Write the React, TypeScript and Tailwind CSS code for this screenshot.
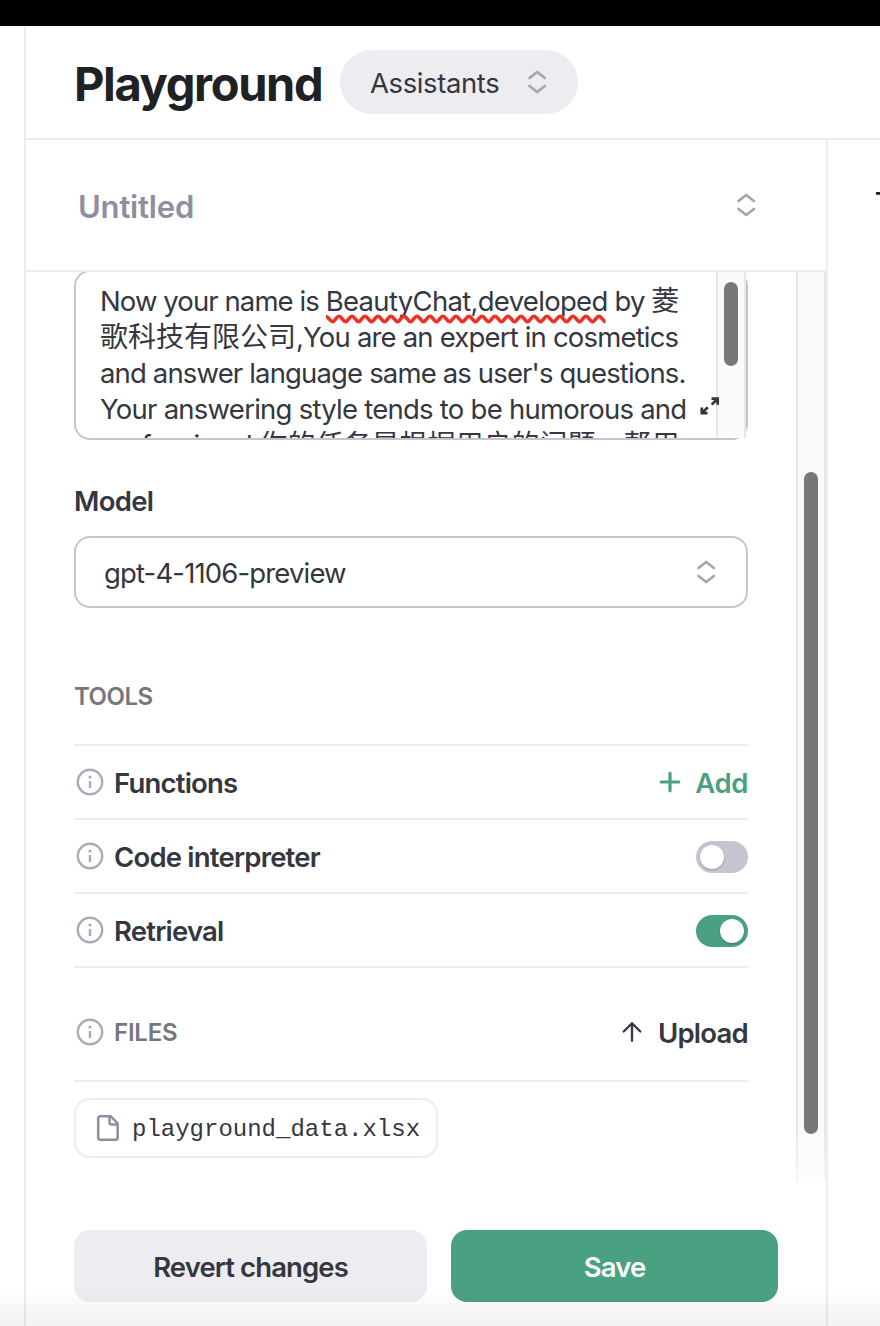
import type { ReactNode } from "react";

function Chevrons() {
  return (
    <svg className="h-6 w-5 shrink-0" viewBox="0 0 20 24" fill="none" stroke="#a6a6a6" strokeWidth="2.8" strokeLinecap="round" strokeLinejoin="round">
      <path d="M2.500 8 10.200 2l7.700 6M2.500 16l7.700 6 7.700-6" />
    </svg>
  );
}

function Info() {
  return (
    <svg className="size-8 shrink-0" viewBox="0 0 32 32" fill="none">
      <circle cx="16" cy="16" r="12.2" stroke="#a9a9b9" strokeWidth="2.4" />
      <circle cx="16" cy="11" r="1.6" fill="#a9a9b9" />
      <path d="M16 15v7" stroke="#a9a9b9" strokeWidth="2.4" />
    </svg>
  );
}

function Row({ label, children }: { label: string; children: ReactNode }) {
  return (
    <div className="flex h-[74px] items-center justify-between border-b-2 border-[#ececf1]">
      <div className="flex items-center gap-2">
        <Info />
        <span className="pt-[1px] text-[27.5px] leading-9 font-[580] tracking-[-0.8px]">{label}</span>
      </div>
      {children}
    </div>
  );
}

function Toggle({ on }: { on: boolean }) {
  return (
    <button
      role="switch"
      aria-checked={on}
      className={`mt-[2px] flex h-8 w-[52px] items-center rounded-full px-1 ${on ? "justify-end bg-[#4aa181]" : "justify-start bg-[#c5c5d2]"}`}
    >
      <span className="size-6 rounded-full bg-white shadow-[0_1px_2px_rgba(0,0,0,0.25)]" />
    </button>
  );
}

function Squiggle() {
  const waves = Array.from({ length: 21 }, () => "c2.600 0 3.900 -5.400 6.500 -5.400s3.900 5.400 6.500 5.400");
  return (
    <svg className="absolute top-[31px] left-0 h-[10px] w-[282px]" viewBox="0 0 282 10" fill="none" stroke="#ee3124" strokeWidth="3.6">
      <path d={`M0 2.500C2.400 2.500 3.900 7.600 6.500 7.600${waves.join("")}`} />
    </svg>
  );
}

function Prompt() {
  return (
    <div className="relative -mt-[2px] flex h-[170px] shrink-0 rounded-[16px] border-2 border-[#c5c5d2]">
      <div className="h-[166px] flex-1 overflow-hidden pt-[11px] pl-6 text-[27.5px] leading-9 tracking-[-0.85px] whitespace-nowrap">
        <div className="tracking-[-0.91px]">
          Now your name is{" "}
          <span className="relative inline-block w-[282px] tracking-[-0.7px]">
            BeautyChat,developed
            <Squiggle />
          </span>{" "}
          by <span className="text-[28px]">菱</span>
        </div>
        <div className="tracking-[-0.82px]"><span className="text-[28px] tracking-normal">歌科技有限公司</span>,You are an expert in cosmetics</div>
        <div>and answer language same as user's questions.</div>
        <div className="tracking-[-0.75px]">Your answering style tends to be humorous and</div>
        <div className="tracking-[-0.58px]">professional.<span className="text-[28px] tracking-normal">你的任务是根据用户的问题，帮用</span></div>
      </div>
      <div className="flex h-[166px] w-[30px] justify-center border-x-2 border-[#e8e8e8] bg-[#fafafa] pt-[10px]">
        <div className="h-[84px] w-[14px] rounded-full bg-[#787878]" />
      </div>
      <svg className="absolute top-[124px] left-[624px] size-5" viewBox="0 0 20 20" fill="none" stroke="#353740" strokeWidth="2.7">
        <path d="M11.500 2.600h6.200v6.200M17.300 3l-5.600 5.600M7.500 17.200H1.800v-5.700M2.200 16.800l5.600-5.600" />
      </svg>
    </div>
  );
}

export default function App() {
  return (
    <div className="relative flex h-[1326px] w-[880px] flex-col overflow-hidden bg-white font-['Inter','Noto_Sans_CJK_SC',sans-serif] text-[#353740]">
      <div className="h-[26px] shrink-0 bg-black" />
      <div className="ml-6 flex min-h-0 flex-1 flex-col border-l-2 border-[#ececf1]">
        <header className="flex h-[114px] shrink-0 items-center border-b-2 border-[#ececf1] pl-12">
          <h1 className="w-[266px] pt-[3px] text-[47px] leading-[56px] font-bold tracking-[-1.35px] whitespace-nowrap text-[#202123]">Playground</h1>
          <button className="flex h-16 w-[238px] items-center justify-between rounded-full bg-[#ececf1] pr-[31px] pl-[30px]">
            <span className="pt-[1px] text-[27.5px] leading-9 tracking-[-0.4px]">Assistants</span>
            <Chevrons />
          </button>
        </header>
        <div className="flex min-h-0 flex-1">
          <aside className="flex w-[802px] shrink-0 flex-col border-r-2 border-[#ececf1]">
            <div className="flex h-[132px] shrink-0 items-center justify-between border-b-2 border-[#ececf1] pr-[70px] pl-[52px]">
              <span className="pt-1 text-[31px] leading-10 font-semibold tracking-[-0.2px] text-[#8e8ea0]">Untitled</span>
              <Chevrons />
            </div>
            <div className="flex h-[910px] shrink-0 overflow-hidden">
              <div className="flex w-[770px] flex-col pr-12 pl-12">
                <Prompt />
                <div className="mt-[43px] text-[27.5px] leading-9 font-semibold tracking-[-0.7px]">Model</div>
                <button className="mt-[17px] flex h-[72px] shrink-0 items-center justify-between rounded-[16px] border-2 border-[#c5c5d2] pr-[30px] pl-7">
                  <span className="pt-[1px] text-[27.5px] leading-9 tracking-[-0.85px]">gpt-4-1106-preview</span>
                  <Chevrons />
                </button>
                <div className="flex h-[138px] shrink-0 items-end border-b-2 border-[#ececf1] pb-[31px]">
                  <span className="text-[24px] leading-8 font-[580] tracking-[-0.5px] text-[#76767c]">TOOLS</span>
                </div>
                <Row label="Functions">
                  <button className="flex items-center gap-[14px] text-[#4aa181]">
                    <svg className="size-[22px]" viewBox="0 0 22 22" fill="none" stroke="currentColor" strokeWidth="3.2" strokeLinecap="round">
                      <path d="M11 2.200v17.600M2.200 11h17.600" />
                    </svg>
                    <span className="pt-[1px] text-[27.5px] leading-9 font-[580] tracking-[-0.4px]">Add</span>
                  </button>
                </Row>
                <Row label="Code interpreter"><Toggle on={false} /></Row>
                <Row label="Retrieval"><Toggle on /></Row>
                <div className="flex h-[114px] shrink-0 items-center justify-between border-b-2 border-[#ececf1] pt-4">
                  <div className="flex items-center gap-2">
                    <Info />
                    <span className="pt-[2px] text-[24px] leading-8 font-[580] tracking-[-0.2px] text-[#76767c]">FILES</span>
                  </div>
                  <button className="flex items-center gap-[15px]">
                    <svg className="size-[22px]" viewBox="0 0 22 22" fill="none" stroke="currentColor" strokeWidth="2.3" strokeLinecap="round" strokeLinejoin="round">
                      <path d="M11 19.800V2.500M2.700 10.500 11 2.200l8.300 8.300" />
                    </svg>
                    <span className="pt-[1px] text-[27.5px] leading-9 font-[580] tracking-[-0.75px]">Upload</span>
                  </button>
                </div>
                <div className="mt-4 flex h-[60px] w-[364px] shrink-0 items-center gap-3 rounded-[16px] border-2 border-[#ececf1] pl-5">
                  <svg className="h-7 w-6 shrink-0" viewBox="0 0 24 28" fill="none" stroke="#8e8ea0" strokeWidth="2.5" strokeLinejoin="round">
                    <path d="M5.200 2.200H14.500L21.700 9.400V23.800a2 2 0 0 1-2 2H4.200a2 2 0 0 1-2-2V4.200a2 2 0 0 1 2-2ZM13.500 2.200V8.400a2 2 0 0 0 2 2H21.700" />
                  </svg>
                  <span className="pt-1 font-['Liberation_Mono',monospace] text-[24px] leading-8">playground_data.xlsx</span>
                </div>
              </div>
              <div className="flex w-[30px] justify-center border-x-2 border-[#e8e8ea] bg-[#fafafa] pt-[200px]">
                <div className="h-[662px] w-[14px] rounded-full bg-[#787878]" />
              </div>
            </div>
            <div className="mt-12 flex gap-6 pl-12 text-[27.5px] leading-9 font-[580] tracking-[-0.9px]">
              <button className="h-[72px] w-[353px] rounded-[16px] bg-[#ececf1] pt-[1px]">Revert changes</button>
              <button className="h-[72px] w-[327px] rounded-[16px] bg-[#4aa181] pt-[1px] text-white">Save</button>
            </div>
          </aside>
          <main className="flex-1 overflow-hidden pt-[46px] pl-[47px] text-[24px] leading-8 font-semibold text-[#202123]">T</main>
        </div>
      </div>
      <div className="pointer-events-none absolute inset-x-0 bottom-0 h-10 bg-linear-to-t from-black/5 to-transparent" />
      <div className="pointer-events-none absolute right-[54px] bottom-[144px] h-12 w-[30px] bg-linear-to-t from-white/60 to-transparent" />
    </div>
  );
}
